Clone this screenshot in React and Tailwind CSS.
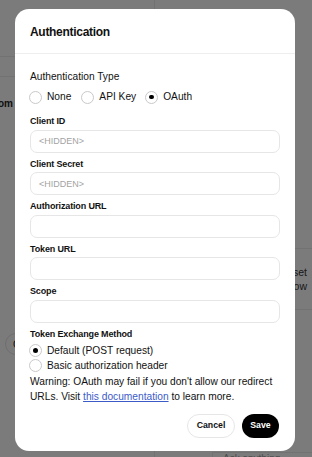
import { useState } from 'react';

const fields = [
  { label: 'Client ID', placeholder: '<HIDDEN>' },
  { label: 'Client Secret', placeholder: '<HIDDEN>' },
  { label: 'Authorization URL', placeholder: '' },
  { label: 'Token URL', placeholder: '' },
  { label: 'Scope', placeholder: '' },
];

const Radio = ({ checked, label, onClick, className = '' }) => (
  <button type="button" onClick={onClick} className={`flex items-center gap-[5px] h-[14px] ${className}`}>
    <span className="w-[13px] h-[13px] rounded-full border border-[#c9c9c9] bg-white flex items-center justify-center">
      {checked && <span className="w-[4.5px] h-[4.5px] rounded-full bg-black" />}
    </span>
    <span className="text-[10.2px] leading-[14px] text-[#111]">{label}</span>
  </button>
);

export default function App() {
  const [authType, setAuthType] = useState('oauth');
  const [method, setMethod] = useState('default');

  return (
    <div className="relative w-[312px] h-[457px] overflow-hidden bg-[#f7f7f7] font-['Liberation_Sans',Arial,sans-serif]">
      {/* Page behind the dialog */}
      <div className="flex h-full">
        <div className="w-[155px] border-r border-[#e5e5e5] flex flex-col">
          <div className="h-[57px] border-b border-[#e5e5e5]" />
          <div className="h-[20px] border-b border-[#e5e5e5]" />
          <div className="h-[52px] flex items-center">
            <div className="w-[13px] overflow-hidden flex justify-end">
              <span className="text-[10px] font-bold text-[#222] whitespace-nowrap">Custom</span>
            </div>
          </div>
          <div className="h-[203px]" />
          <div className="flex items-center h-[24px] px-[5px]">
            <span className="w-[60px] h-[22px] rounded-full border border-[#dcdcdc] flex items-center pl-[7px] text-[10px] text-[#222]">Co</span>
          </div>
        </div>
        <div className="flex-1 flex flex-col">
          <div className="h-[248px]" />
          <div className="h-[62px] border-y border-[#e5e5e5] flex flex-col justify-center items-end pr-[5px] text-[10.5px] leading-[14px] text-[#333]">
            <span>Reset</span>
            <span>flow</span>
          </div>
          <div className="flex-1 flex flex-col justify-end">
            <div className="flex h-[5px]">
              <div className="w-[57px]" />
              <div className="flex-1 border-l border-t border-[#e5e5e5] pl-[10px] text-[10px] leading-[12px] text-[#999] overflow-hidden">Ask anything</div>
            </div>
          </div>
        </div>
      </div>

      {/* Overlay + dialog */}
      <div className="absolute inset-0 bg-black/50 pt-[9px] px-[15px]">
        <div className="w-[280px] h-[442px] bg-white rounded-[14px] flex flex-col">
          <div className="h-[45px] px-[15px] flex items-center border-b border-[#eeeeee]">
            <h2 className="text-[12px] font-bold tracking-[-0.3px] text-[#111] pt-[1px]">Authentication</h2>
          </div>

          <div className="px-[15px] pt-[16px] flex flex-col">
            <p className="text-[10.2px] leading-[14px] text-[#111]">Authentication Type</p>
            <div className="flex items-center mt-[6px] -ml-[1px]">
              <Radio checked={authType === 'none'} label="None" onClick={() => setAuthType('none')} />
              <Radio checked={authType === 'api'} label="API Key" onClick={() => setAuthType('api')} className="ml-[10px]" />
              <Radio checked={authType === 'oauth'} label="OAuth" onClick={() => setAuthType('oauth')} className="ml-[9px]" />
            </div>

            <div className="flex flex-col gap-[4px] mt-[10px]">
              {fields.map((f) => (
                <div key={f.label} className="flex flex-col">
                  <label className="text-[9px] leading-[14px] font-bold tracking-[-0.15px] text-[#111]">{f.label}</label>
                  <input
                    placeholder={f.placeholder}
                    className="mt-[1.5px] h-[23px] w-[250px] rounded-[7px] border border-[#e6e6e6] px-[8px] text-[9px] placeholder:text-[#a3a3a3] outline-none"
                  />
                </div>
              ))}
            </div>

            <p className="mt-[4px] text-[9px] leading-[14px] font-bold tracking-[-0.15px] text-[#111]">Token Exchange Method</p>
            <div className="flex flex-col gap-[1px] mt-[3px] -ml-[1px]">
              <Radio checked={method === 'default'} label="Default (POST request)" onClick={() => setMethod('default')} />
              <Radio checked={method === 'basic'} label="Basic authorization header" onClick={() => setMethod('basic')} />
            </div>
            <p className="mt-[1px] text-[10.2px] leading-[15px] text-[#111]">
              Warning: OAuth may fail if you don't allow our redirect URLs. Visit{' '}
              <a href="#" className="text-[#3b5bc9] underline">this documentation</a> to learn more.
            </p>

            <div className="flex justify-end gap-[7px] mt-[10px] pr-[1px]">
              <button className="h-[24px] w-[48px] rounded-full border border-[#e6e6e6] text-[8.75px] font-bold text-[#111]">Cancel</button>
              <button className="h-[24px] w-[37px] rounded-full bg-black text-[8.75px] font-bold text-white">Save</button>
            </div>
          </div>
        </div>
      </div>
    </div>
  );
}
